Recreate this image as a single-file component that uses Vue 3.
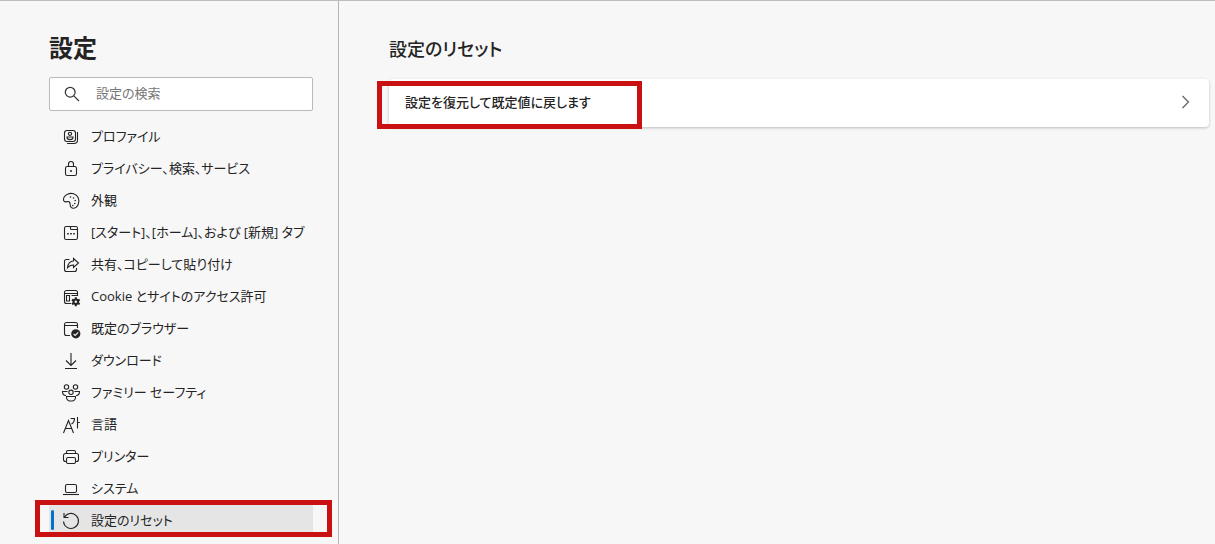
<script setup>
import { ref } from 'vue'

const query = ref('')

const items = [
  { id: 'profile', label: 'プロファイル' },
  { id: 'privacy', label: 'プライバシー、検索、サービス' },
  { id: 'appearance', label: '外観' },
  { id: 'start', label: '[スタート]、[ホーム]、および [新規] タブ' },
  { id: 'share', label: '共有、コピーして貼り付け' },
  { id: 'cookies', label: 'Cookie とサイトのアクセス許可' },
  { id: 'browser', label: '既定のブラウザー' },
  { id: 'downloads', label: 'ダウンロード' },
  { id: 'family', label: 'ファミリー セーフティ' },
  { id: 'language', label: '言語' },
  { id: 'printer', label: 'プリンター' },
  { id: 'system', label: 'システム' },
  { id: 'reset', label: '設定のリセット' },
]
const current = ref('reset')
</script>

<template>
  <div class="page">
    <aside class="sidebar">
      <h1 class="title">設定</h1>
      <label class="search">
        <svg class="search-icon" viewBox="0 0 16 16" aria-hidden="true">
          <circle cx="6.2" cy="6.2" r="4.9" />
          <path d="M9.8 9.8 15 15" />
        </svg>
        <input v-model="query" type="search" placeholder="設定の検索" aria-label="設定の検索" />
      </label>
      <nav class="nav">
        <a
          v-for="item in items"
          :key="item.id"
          :href="'#' + item.id"
          class="item"
          :class="{ active: item.id === current }"
          @click.prevent="current = item.id"
        >
          <svg class="icon" viewBox="0 0 20 20" aria-hidden="true">
            <g v-if="item.id === 'profile'">
              <rect x="3.5" y="3.5" width="11" height="11" rx="2.5" />
              <circle cx="9" cy="6.8" r="1.6" />
              <path d="M6 10h6v.6c0 1.2-1.3 2-3 2s-3-.8-3-2zM16.5 5v8c0 2.2-1.3 3.5-3.5 3.5H6" />
            </g>
            <g v-else-if="item.id === 'privacy'">
              <rect x="4.5" y="7.5" width="11" height="9" rx="1.8" />
              <path d="M7.5 7.5V5a2.5 2.5 0 0 1 5 0v2.5" />
              <circle class="solid" cx="10" cy="12" r="1" />
            </g>
            <g v-else-if="item.id === 'appearance'">
              <path d="M2.6 9.5C2 7.500 3.500 4.500 6.500 3.200c4-1.900 8.900-.4 10.700 3.600 1.800 4.200-.2 9.900-4.400 10.400-2.200.3-3.600-1.300-3.600-3.400 0-2.700-1.200-3.700-3.100-3.200-1.300.4-2.900.3-3.500-1.100z" />
              <g class="solid">
                <circle cx="9.500" cy="6" r=".8" />
                <circle cx="12.500" cy="7" r=".8" />
                <circle cx="14.200" cy="9.500" r=".8" />
                <circle cx="13.800" cy="12.500" r=".8" />
                <circle cx="11.800" cy="14.500" r=".8" />
              </g>
            </g>
            <g v-else-if="item.id === 'start'">
              <rect x="3.500" y="3.500" width="13" height="13" rx="1.800" />
              <path d="M9.500 3.500v2q0 1 1 1h6" />
              <path class="dots" d="M6.200 10.800h1.600M9.200 10.800h1.600M12.200 10.800h1.600" />
            </g>
            <g v-else-if="item.id === 'share'">
              <path d="M8.500 4.500h-3a2 2 0 0 0-2 2v8a2 2 0 0 0 2 2h8a2 2 0 0 0 2-2v-1.500" />
              <path d="M12.500 3.500 17.500 8l-5 4.500V10C9.500 10 7.800 11 6.500 12.800 6.900 8.500 9.200 6.200 12.500 6z" />
            </g>
            <g v-else-if="item.id === 'cookies'">
              <path d="M10 16.500H5.500a2 2 0 0 1-2-2v-9a2 2 0 0 1 2-2h9a2 2 0 0 1 2 2V9M3.500 6.500h13M10.500 8.500H17M5.500 8.500h3v5.500h-3z" />
              <circle class="solid" cx="14.800" cy="14.800" r="3.300" />
              <path class="teeth" d="M14.800 10.300v9M10.900 12.550l7.800 4.500M10.900 17.050l7.800-4.500" />
              <circle class="hole" cx="14.800" cy="14.800" r="1.200" />
            </g>
            <g v-else-if="item.id === 'browser'">
              <path d="M9 16.500H5.500a2 2 0 0 1-2-2v-9a2 2 0 0 1 2-2h9a2 2 0 0 1 2 2V9M3.500 6.500h13" />
              <circle class="solid" cx="14.800" cy="14.800" r="4.600" />
              <path class="check" d="m12.600 15 1.600 1.500 3-3.200" />
            </g>
            <g v-else-if="item.id === 'downloads'">
              <path d="M10 2v12.500M5 9.500l5 5 5-5M4 17.500h12" />
            </g>
            <g v-else-if="item.id === 'family'">
              <circle cx="5.500" cy="4" r="2.200" />
              <circle cx="14.500" cy="4" r="2.200" />
              <circle cx="10" cy="9.300" r="2.200" />
              <path d="M5.500 13.500h9v1a3.500 3.500 0 0 1-3.500 3.500H9a3.500 3.500 0 0 1-3.500-3.500zM6.500 8.500h-5C1.500 11 2.500 12.500 5 12.500M13.500 8.500h5c0 2.500-1 4-3.500 4" />
            </g>
            <g v-else-if="item.id === 'language'">
              <path d="M2.500 18 7.500 5.500 12.500 18M4.300 13.500h6.400M9.500 3.500h4c0 2.800-1.200 4.500-3 5.500M16.500 2v11.500M16.500 7.500h2.300" />
            </g>
            <g v-else-if="item.id === 'printer'">
              <path d="M5.500 14.500h-1a2 2 0 0 1-2-2v-4a2 2 0 0 1 2-2h11a2 2 0 0 1 2 2v4a2 2 0 0 1-2 2h-1M5.500 6.500V5a1.500 1.500 0 0 1 1.500-1.500h6A1.500 1.500 0 0 1 14.500 5v1.500" />
              <rect x="5.500" y="10.500" width="9" height="6" rx="1.500" />
            </g>
            <g v-else-if="item.id === 'system'">
              <rect x="4.500" y="5.500" width="11" height="8" rx="1.500" />
              <path d="M2 15.500h16" />
            </g>
            <g v-else>
              <path d="M3 2v4.500h4.500M3.300 6.500A7.500 7.500 0 1 1 2.500 10.500" />
            </g>
          </svg>
          <span class="label">{{ item.label }}</span>
        </a>
        <div class="callout nav-callout"></div>
      </nav>
    </aside>

    <main class="content">
      <h2 class="heading">設定のリセット</h2>
      <div class="card-wrap">
        <button type="button" class="card">
          <span class="label">設定を復元して既定値に戻します</span>
          <svg class="chevron" viewBox="0 0 16 16" aria-hidden="true">
            <path d="m5.500 2 6 6-6 6" />
          </svg>
        </button>
        <div class="callout card-callout"></div>
      </div>
    </main>
  </div>
</template>

<style>
body {
  background: #f7f7f7;
}
</style>

<style scoped>
.page {
  box-sizing: border-box;
  display: flex;
  height: 100vh;
  overflow: hidden;
  border-top: 1px solid #bdbdbd;
  background: #f7f7f7;
  color: #242424;
  font-family: "Open Sans", "Noto Sans CJK JP", sans-serif;
  font-size: 13px;
  font-feature-settings: "palt";
}
.sidebar {
  box-sizing: border-box;
  flex: 0 0 339px;
  min-width: 0;
  padding: 29px 25px 0 49px;
  border-right: 1px solid #b5b5b5;
}
.title {
  margin: 0 0 11px;
  font-size: 24px;
  line-height: 36px;
  font-weight: 600;
}
.search {
  box-sizing: border-box;
  display: flex;
  align-items: center;
  gap: 16px;
  height: 34px;
  padding: 0 14px;
  border: 1px solid #bababa;
  border-radius: 2px;
  background: #fff;
}
.search-icon {
  flex: none;
  width: 16px;
  height: 16px;
  fill: none;
  stroke: #333;
  stroke-width: 1.2;
}
.search input {
  flex: 1;
  min-width: 0;
  padding: 0 0 2px;
  border: 0;
  outline: 0;
  background: none;
  color: inherit;
  font: inherit;
  font-feature-settings: inherit;
}
.search input::placeholder {
  color: #767676;
  opacity: 1;
}
.nav {
  position: relative;
  padding-top: 9px;
}
.item {
  position: relative;
  display: flex;
  align-items: center;
  gap: 10px;
  height: 32px;
  padding-left: 12px;
  border-radius: 2px;
  color: inherit;
  text-decoration: none;
  white-space: nowrap;
}
.item.active {
  background: #e5e5e5;
}
.item.active::before {
  content: "";
  position: absolute;
  top: 6px;
  left: 2px;
  width: 3px;
  height: 20px;
  border-radius: 2px;
  background: #0072c9;
}
.label {
  padding-bottom: 2px;
}
.icon {
  flex: none;
  width: 20px;
  height: 20px;
  padding-top: 2px;
  fill: none;
  stroke: #242424;
  stroke-width: 1.1;
}
.icon .solid {
  fill: #242424;
  stroke: none;
}
.icon .dots {
  stroke-width: 1.6;
}
.icon .teeth {
  stroke-width: 2;
}
.icon .hole {
  fill: #f7f7f7;
  stroke: none;
}
.icon .check {
  stroke: #f7f7f7;
}
.callout {
  position: absolute;
  box-sizing: border-box;
  border: 5px solid #c91111;
  pointer-events: none;
}
.nav-callout {
  right: -19px;
  bottom: -1px;
  left: -14px;
  height: 37px;
}
.content {
  flex: 1;
  min-width: 0;
  padding: 33px 6px 0 50px;
}
.heading {
  margin: 0 0 15px;
  font-size: 18px;
  line-height: 30px;
  font-weight: 500;
}
.card-wrap {
  position: relative;
}
.card {
  display: flex;
  align-items: center;
  justify-content: space-between;
  width: 100%;
  height: 48px;
  padding: 0 16px 2px;
  border: 0;
  border-radius: 4px;
  background: #fff;
  box-shadow: 0 1px 3px rgba(0, 0, 0, 0.24);
  color: inherit;
  font: inherit;
  font-weight: 500;
  font-feature-settings: inherit;
}
.chevron {
  width: 16px;
  height: 16px;
  fill: none;
  stroke: #616161;
  stroke-width: 1.2;
}
.card-callout {
  top: 2px;
  left: -12px;
  width: 265px;
  height: 48px;
}
</style>
